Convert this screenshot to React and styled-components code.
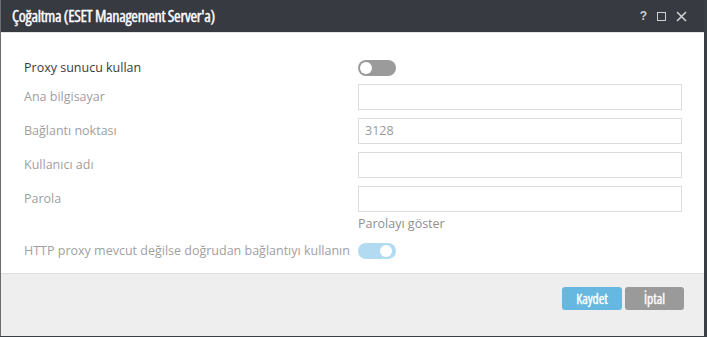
import React from "react";
import styled, { createGlobalStyle } from "styled-components";

const GlobalStyle = createGlobalStyle`
  html, body { margin: 0; padding: 0; }
  body {
    background: #3a3e45;
    font-family: "Open Sans", "Noto Sans", sans-serif;
    width: 707px;
    height: 337px;
    overflow: hidden;
  }
`;

const Dialog = styled.div`
  width: 704px;
  height: 336px;
  background: #fff;
  border-left: 1px solid #6a6d72;
  box-sizing: border-box;
  display: flex;
  flex-direction: column;
`;

const Header = styled.div`
  height: 32px;
  flex: 0 0 32px;
  background: #373a41;
  display: flex;
  align-items: center;
  justify-content: space-between;
  padding: 0 17px 0 11px;
  border-bottom: 1px solid #e4e4e4;
`;

const Title = styled.h1`
  margin: 0;
  font-family: "Liberation Sans Narrow", "Open Sans", sans-serif;
  font-stretch: condensed;
  font-size: 16px;
  letter-spacing: -0.3px;
  font-weight: 400;
  -webkit-text-stroke: 0.4px #fff;
  color: #fff;
`;

const HeaderTools = styled.div`
  display: flex;
  align-items: center;
  gap: 10px;
  color: #cfd0d2;
`;

const Help = styled.span`
  font-family: "Liberation Sans", sans-serif;
  font-weight: 700;
  font-size: 12px;
  line-height: 12px;
`;

const Body = styled.div`
  flex: 1;
  padding: 27px 0 0 23px;
  display: grid;
  grid-template-columns: 334px 324px;
  grid-auto-rows: auto;
  row-gap: 8px;
  align-content: start;
`;

const Label = styled.div`
  font-size: 12.5px;
  height: ${(p) => (p.$short ? "16px" : "26px")};
  line-height: ${(p) => (p.$short ? "16px" : "26px")};
  color: ${(p) => (p.$strong ? "#3b3b3b" : "#a0a0a0")};
  white-space: nowrap;
  margin-top: ${(p) => p.$mt || 0}px;
`;

const Control = styled.div`
  display: flex;
  flex-direction: column;
  margin-top: ${(p) => p.$mt || 0}px;
`;

const Input = styled.div`
  height: 26px;
  box-sizing: border-box;
  border: 1px solid #dcdcdc;
  padding: 0 6px;
  font-size: 12.5px;
  line-height: 24px;
  color: #9a9a9a;
`;

const Hint = styled.div`
  margin-top: 2px;
  font-size: 12.5px;
  line-height: 20px;
  color: #8f8f8f;
`;

const Track = styled.div`
  width: 38px;
  height: 16px;
  border-radius: 8px;
  background: ${(p) => (p.$on ? "#b2dbf2" : "#9b9b9b")};
  position: relative;
`;

const Knob = styled.div`
  position: absolute;
  top: 2px;
  ${(p) => (p.$on ? "right: 4px;" : "left: 2px;")}
  width: 12px;
  height: 12px;
  border-radius: 50%;
  background: #fff;
`;

const Footer = styled.div`
  flex: 0 0 49px;
  background: #eeeeee;
  border-top: 1px solid #dedede;
  display: flex;
  justify-content: flex-end;
  align-items: flex-start;
  gap: 3px;
  padding: 13px 20px 0 0;
`;

const Button = styled.button`
  height: 23px;
  width: ${(p) => p.$w}px;
  border: none;
  border-radius: 3px;
  background: ${(p) => (p.$primary ? "#66b8e1" : "#9a9a9a")};
  color: #fff;
  font-family: "Liberation Sans Narrow", "Open Sans", sans-serif;
  font-stretch: condensed;
  font-weight: 400;
  -webkit-text-stroke: 0.35px #fff;
  font-size: 13.5px;
  padding: 0;
`;

const Toggle = ({ on }) => (
  <Track $on={on}>
    <Knob $on={on} />
  </Track>
);

export default function App() {
  return (
    <>
      <GlobalStyle />
      <Dialog>
        <Header>
          <Title>Çoğaltma (ESET Management Server'a)</Title>
          <HeaderTools>
            <Help>?</Help>
            <svg width="9" height="9" viewBox="0 0 9 9">
              <rect x="0.5" y="0.5" width="8" height="8" fill="none" stroke="currentColor" strokeWidth="1" />
            </svg>
            <svg width="11" height="11" viewBox="0 0 11 11">
              <path d="M1 1 L10 10 M10 1 L1 10" stroke="currentColor" strokeWidth="1.6" />
            </svg>
          </HeaderTools>
        </Header>
        <Body>
          <Label $strong $short>Proxy sunucu kullan</Label>
          <Control>
            <Toggle on={false} />
          </Control>
          <Label>Ana bilgisayar</Label>
          <Control>
            <Input />
          </Control>
          <Label>Bağlantı noktası</Label>
          <Control>
            <Input>3128</Input>
          </Control>
          <Label>Kullanıcı adı</Label>
          <Control>
            <Input />
          </Control>
          <Label>Parola</Label>
          <Control>
            <Input />
            <Hint>Parolayı göster</Hint>
          </Control>
          <Label $short $mt={1}>HTTP proxy mevcut değilse doğrudan bağlantıyı kullanın</Label>
          <Control $mt={1}>
            <Toggle on />
          </Control>
        </Body>
        <Footer>
          <Button $primary $w={60}>Kaydet</Button>
          <Button $w={59}>İptal</Button>
        </Footer>
      </Dialog>
    </>
  );
}
